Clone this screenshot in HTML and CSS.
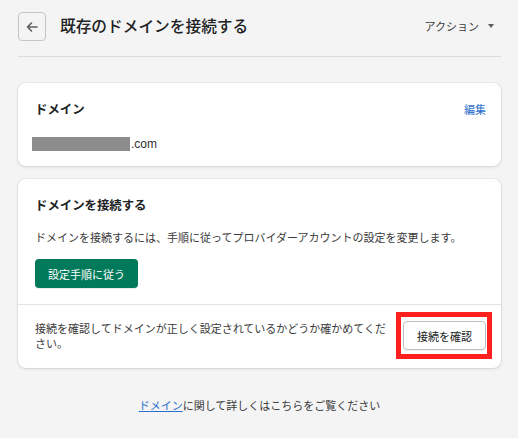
FILE: index.html
```html
<!DOCTYPE html>
<html lang="ja">
<head>
<meta charset="utf-8">
<link rel="stylesheet" href="styles.css">
</head>
<body>
<div class="page">
  <header class="header">
    <button class="back" aria-label="戻る">
      <svg width="12" height="10" viewBox="0 0 12 10"><path d="M11 5H1.5M5.5 1L1.5 5l4 4" fill="none" stroke="#5c5f62" stroke-width="1.6" stroke-linecap="round" stroke-linejoin="round"/></svg>
    </button>
    <h1 class="title">既存のドメインを接続する</h1>
    <div class="actions">アクション <span class="caret"></span></div>
  </header>

  <section class="card">
    <div class="card-section">
      <div class="card-head">
        <h2 class="card-title">ドメイン</h2>
        <a class="edit" href="#">編集</a>
      </div>
      <div class="domain"><span class="mask"></span>.com</div>
    </div>
  </section>

  <section class="card">
    <div class="card-section top">
      <h2 class="card-title">ドメインを接続する</h2>
      <p class="desc">ドメインを接続するには、手順に従ってプロバイダーアカウントの設定を変更します。</p>
      <button class="primary">設定手順に従う</button>
    </div>
    <div class="card-section bottom">
      <p class="verify-text">接続を確認してドメインが正しく設定されているかどうか確かめてください。</p>
      <div class="highlight">
        <button class="secondary">接続を確認</button>
      </div>
    </div>
  </section>

  <p class="footer"><a href="#">ドメイン</a>に関して詳しくはこちらをご覧ください</p>
</div>
</body>
</html>
```

FILE: styles.css
```css
* { box-sizing: border-box; }
html, body { margin: 0; padding: 0; }
body {
  background: #f4f4f4;
  font-family: "Noto Sans CJK JP", "Noto Sans", sans-serif;
  color: #202223;
}
.page {
  padding: 0 17px 0 18px;
}
.header {
  display: flex;
  align-items: center;
  height: 57px;
  border-bottom: 1px solid #dcdcdc;
  padding-bottom: 5px;
}
.back {
  width: 28px;
  height: 29px;
  border: 1px solid #c4c6c8;
  border-radius: 4px;
  background: transparent;
  display: flex;
  align-items: center;
  justify-content: center;
  padding: 0;
  margin-top: 2px;
}
.title {
  margin: 0 0 0 14px;
  font-size: 15.7px;
  font-weight: 500;
  color: #202223;
  flex: 1;
}
.actions {
  font-size: 11px;
  color: #3d3d3d;
  display: flex;
  align-items: center;
  margin-right: 7px;
}
.caret {
  display: inline-block;
  width: 0;
  height: 0;
  border-left: 3px solid transparent;
  border-right: 3px solid transparent;
  border-top: 4px solid #5c5f62;
  margin-left: 9px;
}
.card {
  background: #fff;
  border-radius: 8px;
  box-shadow: 0 0 0 1px rgba(63,63,68,0.05), 0 1px 3px rgba(63,63,68,0.15);
  margin-top: 13px;
}
.header + .card { margin-top: 26px; }
.card-section {
  padding: 17px 15px 15px 17px;
}
.card-head {
  display: flex;
  justify-content: space-between;
  align-items: center;
}
.card-title {
  margin: 0;
  font-size: 12.4px;
  font-weight: 700;
  line-height: 18px;
  color: #202223;
}
.edit {
  font-size: 11px;
  color: #2c6ecb;
  text-decoration: none;
}
.domain {
  margin-top: 19px;
  display: flex;
  align-items: center;
  height: 14px;
  font-family: "Liberation Sans", Arial, sans-serif;
  font-size: 12px;
  color: #303030;
}
.mask {
  display: inline-block;
  width: 98px;
  height: 14px;
  background: #8c8c8c;
  margin-left: -3px;
  margin-right: 1px;
}
.card-section.top {
  padding-bottom: 16px;
  border-bottom: 1px solid #e1e3e5;
}
.desc {
  margin: 15px 0 0;
  font-size: 11px;
  line-height: 16px;
  color: #3a3a3a;
}
.primary {
  margin-top: 14px;
  height: 29px;
  padding: 0 13px;
  background: #007a5a;
  color: #fff;
  border: none;
  border-radius: 4px;
  font-family: inherit;
  font-size: 11px;
  box-shadow: 0 1px 0 rgba(0,0,0,0.08);
}
.card-section.bottom {
  display: flex;
  align-items: center;
  gap: 12px;
  padding: 16px 15px 18px 17px;
}
.verify-text {
  flex: 1;
  margin: 0;
  font-size: 11px;
  line-height: 14.5px;
  color: #3a3a3a;
}
.highlight {
  position: relative;
  flex: none;
}
.highlight::after {
  content: "";
  position: absolute;
  top: -9px;
  bottom: -9px;
  left: -7px;
  right: -6px;
  border: 5px solid #ff1f1f;
  pointer-events: none;
}
.secondary {
  display: block;
  width: 83px;
  height: 29px;
  background: #fff;
  border: 1px solid #babfc3;
  border-radius: 4px;
  font-family: inherit;
  font-size: 11px;
  color: #202223;
  padding: 0;
  box-shadow: 0 1px 0 rgba(0,0,0,0.05);
}
.footer {
  margin: 29px 0 0;
  text-align: center;
  font-size: 11px;
  line-height: 16px;
  color: #3a3a3a;
}
.footer a {
  color: #2c6ecb;
  text-decoration: underline;
}
```
